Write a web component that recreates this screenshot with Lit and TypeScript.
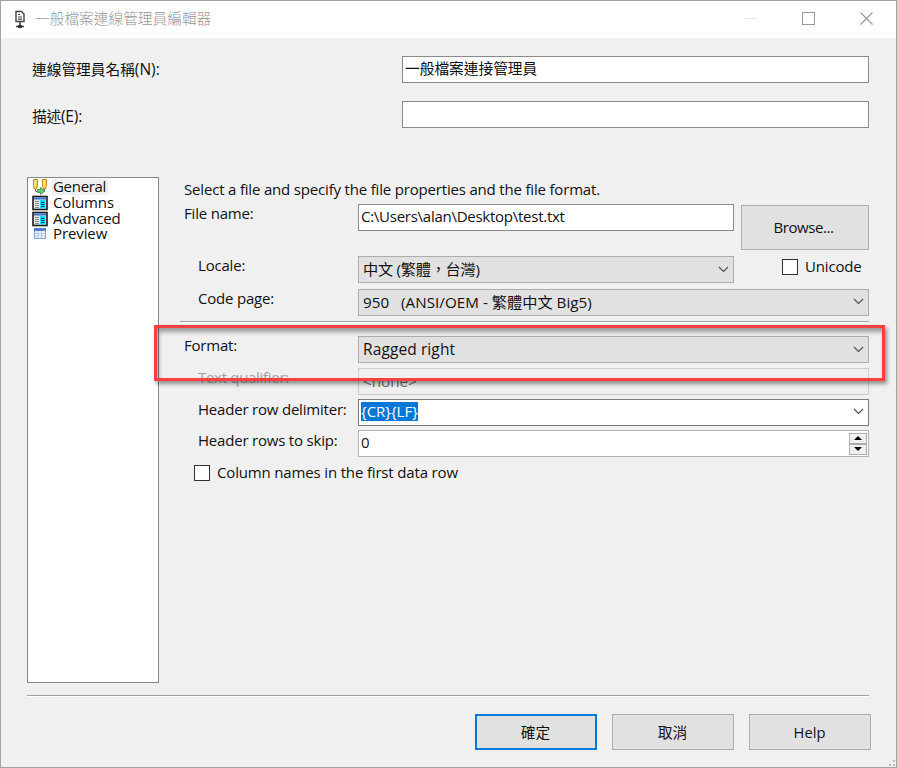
import { LitElement, html, css, svg } from "lit";
import { customElement } from "lit/decorators.js";

const chevron = html`<svg class="chev" width="11" height="7" viewBox="0 0 11 7"><path d="M1 1l4.500 4.500L10 1" fill="none" stroke="#505050" stroke-width="1.200"/></svg>`;

const pageIcons = [
  svg`<path d="M1.500.5h4v6l-1 3.500h-2l-1-3.500z" fill="#f8d65c" stroke="#b98a1c"/><path d="M10.500.5h4v6l-1 3.500h-2l-1-3.500z" fill="#f8d65c" stroke="#b98a1c"/><path d="M3 1.500v5M12 1.500v5" stroke="#fff6c0"/><path d="M3.500 10v2.500h2M12.500 10v2" stroke="#777" fill="none"/><path d="M8.500 8.500l4.500 3.500-4.500 3.500v-2h-3v-3h3z" fill="#6fc46f" stroke="#2f8a3a" stroke-width=".8"/>`,
  svg`<rect x="1" y="1.500" width="14" height="13" fill="#e4e4e4" stroke="#1c1c1c" stroke-width="1.600"/><rect x="2" y="2.500" width="12" height="2" fill="#3b78dc"/><path d="M3 6.500h4M3 8.500h4M3 10.500h4M3 12.500h4" stroke="#8a8a8a"/><rect x="8" y="5" width="5.500" height="8.500" fill="#14dcf5"/><path d="M9 7.500h3.500M9 9.500h3.500M9 11.500h3.500" stroke="#123a8c"/>`,
  svg`<rect x="2.500" y="2.500" width="11" height="10" fill="#f2f6ff" stroke="#7f9fdc"/><rect x="2" y="2" width="12" height="3" fill="#4f7bd6"/><path d="M3 7.500h10M3 10h10M6 5v7M9.500 5v7" stroke="#b9c8e8"/>`,
];

const pages = [
  { name: "General", icon: pageIcons[0] },
  { name: "Columns", icon: pageIcons[1] },
  { name: "Advanced", icon: pageIcons[1] },
  { name: "Preview", icon: pageIcons[2] },
];

@customElement("app-root")
export class AppRoot extends LitElement {
  static styles = css`
    :host { display: block; width: 897px; height: 768px; }
    * { box-sizing: border-box; }
    .win { position: relative; width: 897px; height: 768px; border: 1px solid #a3a3a3; background: #f0f0f0; color: #111;
      font: 15px/20px "Open Sans", "Noto Sans CJK TC", sans-serif; display: flex; flex-direction: column; overflow: hidden; white-space: nowrap; letter-spacing: -.2px; }
    .title { height: 37px; background: #fff; color: #999; display: flex; align-items: center; padding: 0 23px 2px 12px; font-size: 14.700px; letter-spacing: 0; }
    .title .name { flex: 1; padding: 0 0 2px 8px; font-weight: 300; }
    .caps { display: flex; gap: 45px; align-items: center; }
    .top { padding: 18px 27px 0 31px; display: grid; grid-template-columns: 370px 1fr; row-gap: 18px; font-size: 14.700px; letter-spacing: 0; }
    .top .lab { padding-top: 3px; }
    .top .lab.desc { padding-top: 5px; letter-spacing: -.2px; }
    .latin { font-size: 15.500px; }
    .box { height: 27px; background: #fff; border: 1px solid #8a8a8a; padding: 0 2px 3px; display: flex; align-items: center; }
    .file .box { letter-spacing: -.26px; }
    .main { margin-top: 49px; height: 506px; padding: 0 27px 0 26px; display: flex; }
    .list { width: 132px; background: #fff; border: 1px solid #828790; padding: 1px 4px; letter-spacing: -.1px; }
    .item { display: flex; height: 15.800px; align-items: center; line-height: 14px; }
    .item .cap { padding: 0 2px 0 1px; margin-left: 4px; height: 16px; }
    .item.sel .cap { background: #f0f0f0; letter-spacing: -.3px; }
    .panel { flex: 1; padding-left: 21px; display: flex; flex-direction: column; }
    .intro { padding: 2px 0 0 4px; height: 27px; letter-spacing: -.18px; }
    .row { display: grid; grid-template-columns: 178px 1fr; height: 31px; align-items: start; flex: none; }
    .row .lab { padding-left: 4px; line-height: 18px; }
    .row .lab.in { padding-left: 18px; }
    .row .lab.low { line-height: 21px; }
    .row.file { grid-template-columns: 178px 376px 1fr; height: 52px; }
    .row.loc { grid-template-columns: 178px 376px 1fr; height: 33px; }
    .row.code { height: 32px; }
    .row.fmt { margin-top: 13px; height: 32px; }
    .btn { background: #e1e1e1; border: 1px solid #adadad; display: flex; align-items: center; justify-content: center; }
    .browse { width: 128px; height: 45px; margin: 1px 0 0 7px; padding: 0 3px 2px 0; letter-spacing: -.45px; }
    .combo { height: 27px; background: #e1e1e1; border: 1px solid #adadad; padding: 0 4px 1px; display: flex; align-items: center; justify-content: space-between; font-size: 15.200px; letter-spacing: 0; white-space: pre; }
    .loc .combo { letter-spacing: -.25px; }
    .code .combo { padding-bottom: 2px; letter-spacing: .03px; }
    .fmt .combo { font-size: 15.500px; letter-spacing: .1px; }
    .combo.edit { background: #fff; border-color: #7a7a7a; padding: 0 4px 2px 2px; font-size: 15px; }
    .combo.dis { background: #efefef; border-color: #ccc; color: #6d6d6d; padding-bottom: 2px; }
    .dim { color: #a0a0a0; letter-spacing: -.3px; }
    .hl { background: #0078d7; color: #fff; line-height: 19px; }
    .check { display: flex; align-items: center; gap: 7px; height: 16px; line-height: 18px; letter-spacing: -.16px; }
    .check .text { padding-bottom: 2px; }
    .check.uni { margin: 3px 0 0 48px; }
    .check.first { margin: 4px 0 0 14px; }
    .tick { width: 16px; height: 16px; background: #fff; border: 1px solid #333; }
    .sep { height: 2px; border-top: 1px solid #a0a0a0; background: #fff; flex: none; }
    .sep.wide { margin: 12px 27px 0 26px; }
    .mark { position: absolute; left: 153px; top: 324px; width: 731px; height: 56px; border: 3px solid #f94040; box-shadow: 2px 3px 4px rgba(0,0,0,.4), inset 2px 4px 4px rgba(0,0,0,.35); }
    .spin { height: 27px; background: #fff; border: 1px solid #b4b4b4; padding: 0 1px 0 2px; display: flex; justify-content: space-between; align-items: center; }
    .spin .num { padding-bottom: 4px; }
    .arrows { display: flex; flex-direction: column; }
    .arrows span { width: 18px; height: 11px; background: #f0f0f0; border: 1px solid #adadad; display: flex; align-items: center; justify-content: center; }
    .foot { display: flex; gap: 15px; justify-content: flex-end; margin: 17px 25px 0 0; letter-spacing: 0; }
    .foot .btn { width: 122px; height: 36px; font-size: 14.700px; padding: 0 1px 1px 0; }
    .foot .ok { border: 2px solid #0078d7; }
    .grip { position: absolute; right: 0; bottom: 0; }
  `;

  render() {
    return html`<div class="win">
      <div class="title">
        <svg width="14" height="20" viewBox="0 0 14 20"><path d="M3 2.500h5.500l2.500 2.500v7.500h-8z" fill="#fff" stroke="#444" stroke-width="1.400"/><path d="M5 5.500h2M5 8h4M5 10.200h4" stroke="#444" stroke-width="1.200"/><path d="M7 12.500v5M3 17.500h8" stroke="#444" stroke-width="1.500"/><ellipse cx="7" cy="17.500" rx="2.500" ry="1.700" fill="#333"/></svg>
        <span class="name">一般檔案連線管理員編輯器</span>
        <div class="caps">
          <svg width="12" height="13"><path d="M0 6.500h12" stroke="#e8e8e8"/></svg>
          <svg width="13" height="13"><rect x=".5" y=".5" width="12" height="12" fill="none" stroke="#999"/></svg>
          <svg width="13" height="13"><path d="M.5.5l12 12M12.500.5l-12 12" stroke="#999" stroke-width="1.100"/></svg>
        </div>
      </div>
      <div class="top">
        <span class="lab">連線管理員名稱<span class="latin">(N):</span></span><div class="box">一般檔案連接管理員</div>
        <span class="lab desc">描述<span class="latin">(E):</span></span><div class="box"></div>
      </div>
      <div class="main">
        <div class="list">
          ${pages.map((p, i) => html`<div class="item ${i === 0 ? "sel" : ""}"><svg width="16" height="16" viewBox="0 0 16 16">${p.icon}</svg><span class="cap">${p.name}</span></div>`)}
        </div>
        <div class="panel">
          <div class="intro">Select a file and specify the file properties and the file format.</div>
          <div class="row file"><span class="lab">File name:</span><div class="box">C:\\Users\\alan\\Desktop\\test.txt</div><div class="btn browse">Browse...</div></div>
          <div class="row loc"><span class="lab in">Locale:</span><div class="combo"><span>中文 (繁體，台灣)</span>${chevron}</div><div class="check uni"><span class="tick"></span><span class="text">Unicode</span></div></div>
          <div class="row code"><span class="lab in">Code page:</span><div class="combo"><span>950   (ANSI/OEM - 繁體中文 Big5)</span>${chevron}</div></div>
          <div class="sep"></div>
          <div class="row fmt"><span class="lab">Format:</span><div class="combo"><span>Ragged right</span>${chevron}</div></div>
          <div class="row"><span class="lab in dim">Text qualifier:</span><div class="combo dis">&lt;none&gt;</div></div>
          <div class="row"><span class="lab in low">Header row delimiter:</span><div class="combo edit"><span class="hl">{CR}{LF}</span>${chevron}</div></div>
          <div class="row"><span class="lab in low">Header rows to skip:</span><div class="spin"><span class="num">0</span><div class="arrows">
            <span><svg width="8" height="4"><path d="M0 4l4-4 4 4z" fill="#000"/></svg></span>
            <span><svg width="8" height="4"><path d="M0 0l4 4 4-4z" fill="#000"/></svg></span>
          </div></div></div>
          <div class="check first"><span class="tick"></span><span class="text">Column names in the first data row</span></div>
        </div>
      </div>
      <div class="sep wide"></div>
      <div class="foot"><div class="btn ok">確定</div><div class="btn">取消</div><div class="btn">Help</div></div>
      <div class="mark"></div>
      <svg class="grip" width="8" height="8"><path d="M5 1h2v2H5zM5 5h2v2H5zM1 5h2v2H1z" fill="#bbb"/></svg>
    </div>`;
  }
}
